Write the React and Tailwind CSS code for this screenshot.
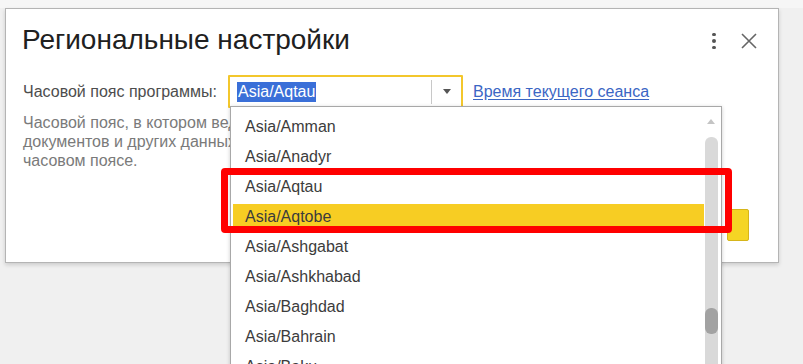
import React from "react";

const items = [
  "Asia/Amman",
  "Asia/Anadyr",
  "Asia/Aqtau",
  "Asia/Aqtobe",
  "Asia/Ashgabat",
  "Asia/Ashkhabad",
  "Asia/Baghdad",
  "Asia/Bahrain",
  "Asia/Baku",
];

export default function App() {
  return (
    <div
      className="relative w-[803px] h-[364px] overflow-hidden bg-[#f0f0f0] pt-[8px] pl-[5px]"
      style={{ fontFamily: '"Liberation Sans", Arial, sans-serif' }}
    >
      <div className="absolute left-0 top-0 w-full h-[8px] bg-[#f6f6f6]" />
      {/* Dialog */}
      <div className="relative w-[774px] h-[255px] bg-white border border-[#b4b4b4] shadow-[0_2px_4px_rgba(0,0,0,0.15)] flex flex-col">
        <div className="flex items-start justify-between pl-[16px] pr-[20px] pt-[14px]">
          <h1 className="text-[28px] leading-[34px] text-[#202020] font-normal">
            Региональные настройки
          </h1>
          <div className="flex items-center gap-[24px] pt-[9px]">
            <div className="flex flex-col gap-[3px] w-[4px] items-center">
              <span className="w-[3.5px] h-[3.5px] rounded-full bg-[#555]" />
              <span className="w-[3.5px] h-[3.5px] rounded-full bg-[#555]" />
              <span className="w-[3.5px] h-[3.5px] rounded-full bg-[#555]" />
            </div>
            <svg width="18" height="18" viewBox="0 0 18 18">
              <path d="M2 2 L16 16 M16 2 L2 16" stroke="#666" strokeWidth="1.6" fill="none" />
            </svg>
          </div>
        </div>

        <div className="flex items-center pl-[17px] mt-[18px]">
          <span className="text-[16px] text-[#4d4d4d] w-[205px]">Часовой пояс программы:</span>
          <div className="flex items-center w-[235px] h-[33px] border-2 border-[#f3c72c] rounded-[1px]">
            <div className="flex-1 pl-[7px]">
              <span className="bg-[#3a6fd8] text-white text-[16px] leading-[20px] px-[1px] inline-block">
                Asia/Aqtau
              </span>
            </div>
            <div className="w-px h-[24px] bg-[#c8c8c8]" />
            <div className="w-[29px] flex justify-center">
              <svg width="8" height="5" viewBox="0 0 8 5">
                <path d="M0 0 L8 0 L4 5 Z" fill="#555" />
              </svg>
            </div>
          </div>
          <a className="ml-[10px] text-[16px] text-[#3b66c4] underline underline-offset-2">
            Время текущего сеанса
          </a>
        </div>

        <div className="pl-[17px] mt-[5px] text-[16px] leading-[19px] text-[#7a7a7a]">
          <div>Часовой пояс, в котором ведется учет всех дат и времени</div>
          <div>документов и других данных информационной базы в</div>
          <div>часовом поясе.</div>
        </div>

        <div className="flex-1 flex justify-end items-start pr-[29px] pt-[39px]">
          <div className="w-[22px] h-[32px] bg-[#f5d524] border border-[#d6b51a] rounded-[2px]" />
        </div>
      </div>

      {/* Dropdown list */}
      <div className="absolute left-[230px] top-[106px] w-[492px] h-[270px] bg-white border border-[#a8a8a8] shadow-[0_1px_4px_rgba(0,0,0,0.2)] flex">
        <div className="flex-1 pt-[5px] pl-[2px]">
          {items.map((it, i) => (
            <div key={it} className="h-[30px] flex items-center">
              <div
                className={
                  "w-full h-[27px] flex items-center pl-[12px] text-[16px] text-[#3c3c3c] " +
                  (i === 3 ? "bg-[#f7cd23]" : "")
                }
              >
                {it}
              </div>
            </div>
          ))}
        </div>
        <div className="w-[14px] mr-[3px] flex flex-col items-center pt-[12px]">
          <svg width="8" height="5" viewBox="0 0 8 5">
            <path d="M4 0 L8 5 L0 5 Z" fill="#c4c4c4" />
          </svg>
          <div className="mt-[13px] w-[13px] flex-1 bg-[#d9d9d9] rounded-t-[6px] relative">
            <div className="absolute left-0 top-[171px] w-[13px] h-[26px] rounded-[6px] bg-[#a2a2a2]" />
          </div>
        </div>
      </div>

      {/* Red annotation */}
      <div className="absolute left-[221px] top-[168px] w-[511px] h-[65px] border-[7px] border-[#ff0000] rounded-[4px]" />
    </div>
  );
}
